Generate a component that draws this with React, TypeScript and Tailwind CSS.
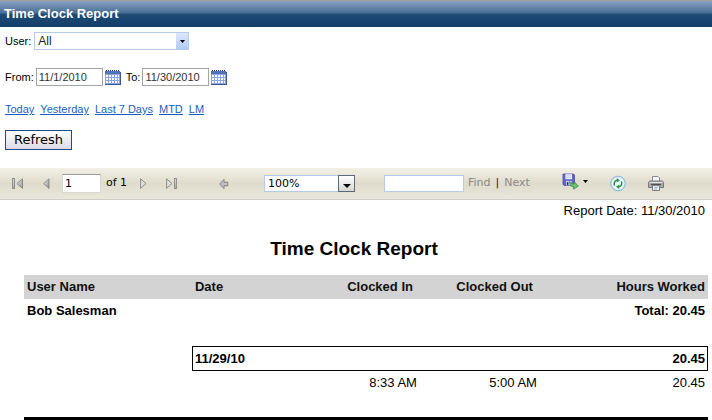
import React from "react";

const arial = "font-['Liberation_Sans',Arial,sans-serif]";
const verdana = "font-['DejaVu_Sans',Verdana,sans-serif]";

function CalendarIcon() {
  return (
    <svg width="16" height="17" viewBox="0 0 16 17" shapeRendering="crispEdges" aria-hidden="true">
      <path d="M1 1h1v1h-1zM3 1h1v1h-1zM5 1h1v1h-1zM7 1h1v1h-1zM9 1h1v1h-1zM11 1h1v1h-1zM13 1h1v1h-1z" fill="#26345f" />
      <rect x="0" y="2" width="15" height="14" fill="#8ba6dc" />
      <rect x="0" y="2" width="15" height="3" fill="#5272bb" />
      <path d="M1 6h2v2H1zM4 6h2v2H4zM7 6h2v2H7zM10 6h2v2h-2zM13 6h1v2h-1zM1 9h2v2H1zM4 9h2v2H4zM7 9h2v2H7zM10 9h2v2h-2zM13 9h1v2h-1zM1 12h2v2H1zM4 12h2v2H4zM7 12h2v2H7zM10 12h2v2h-2zM13 12h1v2h-1z" fill="#f8faff" />
      <path d="M15 3h1v13h-1zM0 15h16v1H0z" fill="#3a579c" />
    </svg>
  );
}

function ArrowFill() {
  return (
    <defs>
      <linearGradient id="arrowFill" x1="0" y1="0" x2="1" y2="1">
        <stop offset="0" stopColor="#f4f4f4" />
        <stop offset="1" stopColor="#8c8c8c" />
      </linearGradient>
    </defs>
  );
}

function FirstIcon() {
  return (
    <svg width="12" height="12" viewBox="0 0 12 12" aria-hidden="true">
      <ArrowFill />
      <rect x="0.5" y="0.5" width="2" height="10" fill="url(#arrowFill)" stroke="#8a8a88" strokeWidth="0.9" />
      <path d="M10.5 0.8v9.6L5 5.6z" fill="url(#arrowFill)" stroke="#858583" strokeWidth="0.9" />
    </svg>
  );
}

function PrevIcon() {
  return (
    <svg width="7" height="12" viewBox="0 0 7 12" aria-hidden="true">
      <path d="M6 0.8v9.6L0.6 5.6z" fill="url(#arrowFill)" stroke="#858583" strokeWidth="0.9" />
    </svg>
  );
}

function NextIcon() {
  return (
    <svg width="7" height="12" viewBox="0 0 7 12" aria-hidden="true">
      <path d="M0.6 0.8v9.6L6 5.6z" fill="#dcdcd8" stroke="#858583" strokeWidth="0.9" />
    </svg>
  );
}

function LastIcon() {
  return (
    <svg width="12" height="12" viewBox="0 0 12 12" aria-hidden="true">
      <path d="M0.6 0.8v9.6L6 5.6z" fill="#dcdcd8" stroke="#858583" strokeWidth="0.9" />
      <rect x="8.5" y="0.5" width="2" height="10" fill="url(#arrowFill)" stroke="#8a8a88" strokeWidth="0.9" />
    </svg>
  );
}

function BackIcon() {
  return (
    <svg width="10" height="12" viewBox="0 0 10 12" aria-hidden="true">
      <path d="M0.6 6L5 1.4v2.8h3.8v3.6H5v2.8z" fill="#bdbdb9" stroke="#7d7d7b" strokeWidth="0.9" />
    </svg>
  );
}

function ExportIcon() {
  return (
    <svg width="17" height="17" viewBox="0 0 17 17" aria-hidden="true">
      <path d="M1 1h10.5l1 1v10.5H2.2L1 11.3z" fill="#6466c8" stroke="#4646a4" strokeWidth="0.8" />
      <rect x="3.4" y="1.2" width="6.6" height="5" fill="#f1f2fb" />
      <path d="M4 3h5.4M4 4.6h5.4" stroke="#b6bbe2" strokeWidth="0.6" />
      <rect x="4" y="8" width="5.5" height="4.3" fill="#d7d9ea" />
      <rect x="4.8" y="9" width="1.6" height="3" fill="#34347e" />
      <path d="M7.5 8.6c1.2 1.6 2.8 2.5 4.6 2.5l.4-2.1 3.7 4.1-4.5 3 .1-2.1c-2.5-.2-4.3-2.2-4.3-5.400z" fill="#6cc56c" stroke="#2f8a3c" strokeWidth="0.8" />
    </svg>
  );
}

function ReloadIcon() {
  return (
    <svg width="16" height="17" viewBox="0 0 16 17" aria-hidden="true">
      <circle cx="8" cy="8.5" r="7.3" fill="#d6ebf7" stroke="#86b3d8" />
      <circle cx="8" cy="8.5" r="5.8" fill="#eef8fb" />
      <path d="M4.600 10.600C3.500 8 4.600 5.600 7.200 5.200" fill="none" stroke="#2d9447" strokeWidth="1.5" />
      <path d="M6.800 3l3.200 2.200-3.200 2.300z" fill="#2d9447" />
      <path d="M11.400 6.400c1.100 2.600 0 5-2.600 5.400" fill="none" stroke="#2d9447" strokeWidth="1.5" />
      <path d="M9.200 9.500L6 11.800l3.200 2.200z" fill="#2d9447" />
    </svg>
  );
}

function PrinterIcon() {
  return (
    <svg width="16" height="17" viewBox="0 0 16 17" aria-hidden="true">
      <path d="M4.5 6.5v-5h5.500l1.500 1.500v3.500z" fill="#f7f7f7" stroke="#8a8a8a" />
      <path d="M1.500 6h13l1 1.500v5H.5v-5z" fill="#a9aaab" stroke="#77787a" />
      <path d="M1.500 7.500h13" stroke="#e4e4e4" />
      <path d="M3 9.500h10" stroke="#505153" strokeWidth="1.400" />
      <path d="M4.500 10.500h7v5h-7z" fill="#eef1f6" stroke="#7c7c7c" />
      <path d="M6 12.500h4M6 14h3" stroke="#8c9bb8" strokeWidth="0.7" />
      <rect x="12.500" y="10.500" width="1.500" height="1.300" fill="#7bd06e" />
    </svg>
  );
}

function DateField({ id, label, value }: { id: string; label: string; value: string }) {
  return (
    <div className="flex items-center">
      <label htmlFor={id} className="mr-[2px]">{label}</label>
      <input
        id={id}
        defaultValue={value}
        className="h-[18px] w-[67px] border border-[#a5a5a5] bg-white px-[2px] text-[11px] text-[#333]"
      />
      <button type="button" aria-label={`Pick ${label}`} className="ml-[2px] flex">
        <CalendarIcon />
      </button>
    </div>
  );
}

function Filters() {
  return (
    <form className="px-[5px] pt-[5px] text-[11px] leading-4 text-black" onSubmit={(e) => e.preventDefault()}>
      <div className="flex h-[18px] items-center">
        <label htmlFor="user" className="mr-[3px]">User:</label>
        <div className="relative flex">
          <select
            id="user"
            defaultValue="All"
            className="h-[18px] w-[155px] appearance-none border border-[#b4cbee] bg-white pl-[3px] text-[12px] leading-4 text-[#222]"
          >
            <option>All</option>
            <option>Bob Salesman</option>
          </select>
          <span className="pointer-events-none absolute inset-y-px right-px flex w-3 items-center justify-center bg-linear-to-b from-[#dce8fc] to-[#b2cbf5]">
            <svg width="5" height="3" viewBox="0 0 5 3" aria-hidden="true"><path d="M0 0h5L2.5 3z" /></svg>
          </span>
        </div>
      </div>
      <div className="mt-[18px] flex h-[18px] items-center gap-[5px]">
        <DateField id="from" label="From:" value="11/1/2010" />
        <DateField id="to" label="To:" value="11/30/2010" />
      </div>
      <nav className="mt-[15px] flex gap-[6px] text-[#1a5fc0] underline">
        <a href="#today">Today</a>
        <a href="#yesterday">Yesterday</a>
        <a href="#week">Last 7 Days</a>
        <a href="#mtd">MTD</a>
        <a href="#lm">LM</a>
      </nav>
      <button
        type="submit"
        className={`mt-[13px] flex h-5 w-[67px] items-center justify-center border border-[#1d4a8a] bg-linear-to-b from-white to-[#dcdae6] text-[13px] ${verdana}`}
      >
        Refresh
      </button>
    </form>
  );
}

function Toolbar() {
  return (
    <div
      role="toolbar"
      aria-label="Report"
      className={`mt-[18px] flex h-8 items-center border-b border-[#cfcdc4] bg-linear-to-b from-[#f3f1e6] via-[#dfdccd] to-[#e9e7db] pl-3 text-[11px] text-black ${verdana}`}
    >
      <button type="button" aria-label="First page"><FirstIcon /></button>
      <button type="button" aria-label="Previous page" className="ml-[19px]"><PrevIcon /></button>
      <input
        aria-label="Page"
        defaultValue="1"
        className="ml-3 h-[19px] w-[39px] border border-[#d8d8d4] border-t-[#9b9b98] bg-white px-[2px]"
      />
      <span className="ml-[5px] w-[34px]">of 1</span>
      <button type="button" aria-label="Next page"><NextIcon /></button>
      <button type="button" aria-label="Last page" className="ml-[19px]"><LastIcon /></button>
      <button type="button" aria-label="Back" className="ml-[41px]"><BackIcon /></button>
      <div className="relative ml-[35px] flex">
        <select
          aria-label="Zoom"
          defaultValue="100%"
          className="h-[17px] w-[91px] appearance-none border border-[#b4cbee] bg-white pl-[3px] leading-[15px]"
        >
          <option>100%</option>
          <option>200%</option>
        </select>
        <span className="pointer-events-none absolute inset-y-0 right-0 flex w-[17px] items-end justify-center border border-[#5b6a78] bg-linear-to-b from-white to-[#d6d6d2] pb-[3px]">
          <svg width="8" height="4" viewBox="0 0 8 4" aria-hidden="true"><path d="M0 0h8L4 4z" /></svg>
        </span>
      </div>
      <input aria-label="Find text" className="ml-[29px] h-[17px] w-20 border border-[#b4cbee] bg-white px-[2px]" />
      <button type="button" className="ml-1 text-[#8a8a88]">Find</button>
      <span className="mx-[5px] text-[#401020]">|</span>
      <button type="button" className="text-[#8a8a88]">Next</button>
      <button type="button" aria-label="Export" className="mb-1 ml-8 flex items-center gap-1">
        <ExportIcon />
        <svg width="5" height="3" viewBox="0 0 5 3" aria-hidden="true"><path d="M0 0h5L2.5 3z" /></svg>
      </button>
      <button type="button" aria-label="Reload" className="ml-[22px]"><ReloadIcon /></button>
      <button type="button" aria-label="Print" className="ml-[22px]"><PrinterIcon /></button>
    </div>
  );
}

function Report() {
  return (
    <main className="pr-1 text-[13px] leading-4 text-black">
      <p className="pt-[3px] pr-[3px] text-right">Report Date: 11/30/2010</p>
      <h2 className="mt-[18px] text-center text-[19px] leading-6 font-bold">Time Clock Report</h2>
      <div className="mt-[14px] pl-6">
        <table className="w-full table-fixed border-separate border-spacing-0 border-b-[3px] border-black">
          <colgroup>
            <col className="w-[24.56%]" />
            <col className="w-[15.79%]" />
            <col className="w-[17.54%]" />
            <col className="w-[17.54%]" />
            <col />
          </colgroup>
          <thead>
            <tr className="h-6 bg-[#d3d3d3] text-[#111]">
              <th className="px-[3px] text-left">User Name</th>
              <th className="px-[3px] text-left">Date</th>
              <th className="pr-[7px] text-right">Clocked In</th>
              <th className="pr-[7px] text-right">Clocked Out</th>
              <th className="px-[3px] text-right">Hours Worked</th>
            </tr>
          </thead>
          <tbody>
            <tr className="h-[47px] align-top font-bold">
              <td className="px-[3px] pt-1" colSpan={4}>Bob Salesman</td>
              <td className="px-[3px] pt-1 text-right">Total: 20.45</td>
            </tr>
            <tr className="h-[25px] font-bold">
              <td />
              <td className="border-y border-l border-black px-[2px]">11/29/10</td>
              <td className="border-y border-black" />
              <td className="border-y border-black" />
              <td className="border-y border-r border-black px-[2px] text-right">20.45</td>
            </tr>
            <tr className="h-[46px] align-top">
              <td />
              <td />
              <td className="px-[3px] pt-1 text-right">8:33 AM</td>
              <td className="px-[3px] pt-1 text-right">5:00 AM</td>
              <td className="px-[3px] pt-1 text-right">20.45</td>
            </tr>
          </tbody>
        </table>
      </div>
    </main>
  );
}

export default function App() {
  return (
    <div className={`bg-white ${arial}`}>
      <header className="flex h-[27px] items-center border-t border-[#a5a09a] bg-[linear-gradient(#87a2c0,#4a6f97_45%,#1d4a77_52%,#123e68)] px-1">
        <h1 className="text-[13px] font-bold text-white">Time Clock Report</h1>
      </header>
      <Filters />
      <Toolbar />
      <Report />
    </div>
  );
}
